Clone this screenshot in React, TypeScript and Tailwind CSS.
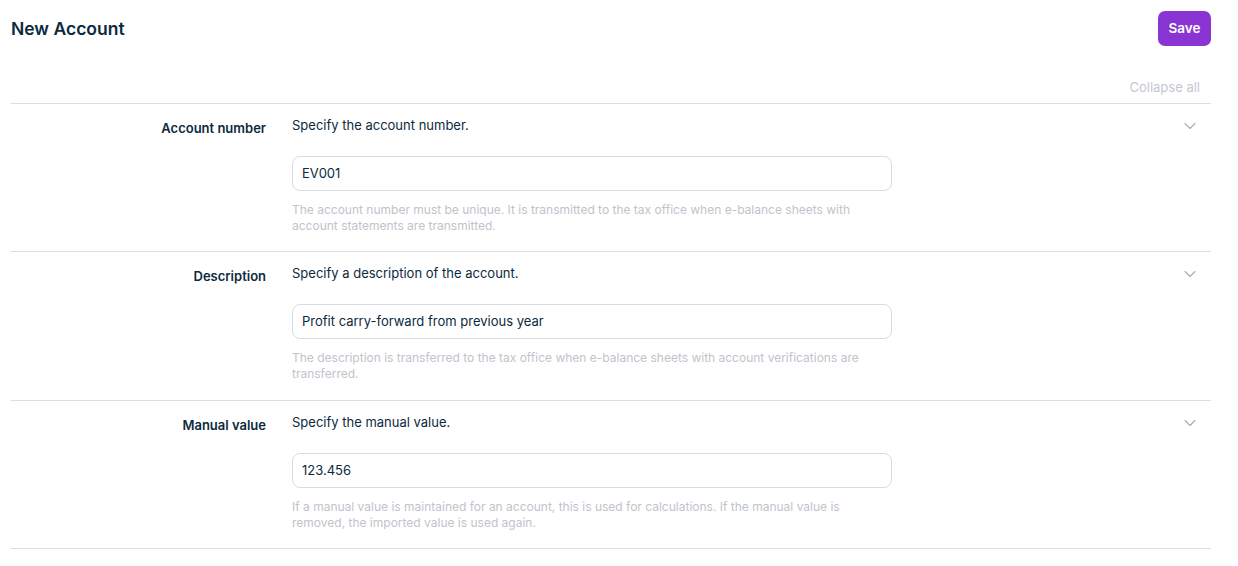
import React from "react";

const rows = [
  {
    label: "Account number",
    prompt: "Specify the account number.",
    value: "EV001",
    help: "The account number must be unique. It is transmitted to the tax office when e-balance sheets with account statements are transmitted.",
  },
  {
    label: "Description",
    prompt: "Specify a description of the account.",
    value: "Profit carry-forward from previous year",
    help: "The description is transferred to the tax office when e-balance sheets with account verifications are transferred.",
  },
  {
    label: "Manual value",
    prompt: "Specify the manual value.",
    value: "123.456",
    help: "If a manual value is maintained for an account, this is used for calculations. If the manual value is removed, the imported value is used again.",
  },
];

function Chevron() {
  return (
    <svg width="12" height="8" viewBox="0 0 12 8" fill="none" className="mt-[7px]">
      <path d="M1 1.5 L6 6.5 L11 1.5" stroke="#a7adb8" strokeWidth="1.1" strokeLinecap="round" strokeLinejoin="round" />
    </svg>
  );
}

export default function App() {
  return (
    <div className="min-h-[566px] w-[1238px] bg-white text-[#0c2a3d]" style={{ fontFamily: "Inter, 'Liberation Sans', sans-serif" }}>
      <div className="ml-[11px] w-[1200px] pt-[11px]">
        <div className="flex items-center justify-between">
          <h1 className="text-[17.5px] font-semibold leading-[24px] text-[#0c2a3d]">New Account</h1>
          <button className="h-[35px] w-[53px] rounded-[7px] bg-[#8a34d4] text-[13.5px] font-semibold text-white">Save</button>
        </div>
        <div className="mt-[31px] mb-[6px] flex justify-end pr-[11px]">
          <span className="text-[13px] leading-[20px] text-[#c3c8cf]">Collapse all</span>
        </div>
        <div className="border-b border-[#dcdee3]">
          {rows.map((r, i) => (
            <div
              key={r.label}
              className={`flex border-t border-[#dcdee3] pt-[11px] ${i === 1 ? "pb-[18px]" : "pb-[17px]"}`}
            >
              <div className="w-[255px] shrink-0 pt-[3px] text-right text-[13px] font-semibold leading-[20px] text-[#0c2a3d]">
                {r.label}
              </div>
              <div className="ml-[26px] w-[600px] shrink-0">
                <div className="text-[13px] leading-[20px] text-[#0c2a3d]">{r.prompt}</div>
                <div className="mt-[21px] flex h-[35px] items-center rounded-[8px] border border-[#d9dbe1] px-[9px] text-[13px] text-[#0c2a3d]">
                  {r.value}
                </div>
                <div className="mt-[11px] w-[570px] text-[12px] leading-[16px] text-[#c0c4cc]">{r.help}</div>
              </div>
              <div className="flex flex-1 justify-end pr-[15px]">
                <Chevron />
              </div>
            </div>
          ))}
        </div>
      </div>
    </div>
  );
}
